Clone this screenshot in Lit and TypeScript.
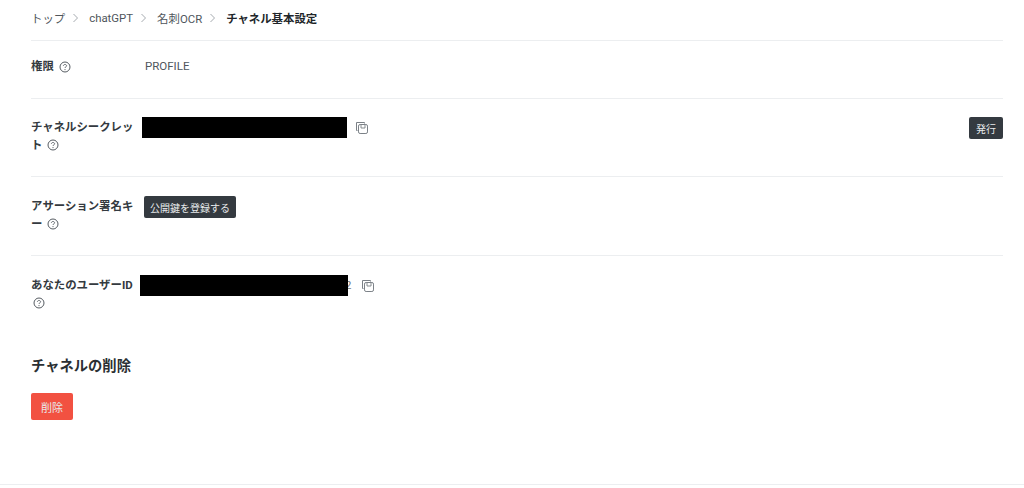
import { LitElement, html, css } from "lit";
import { customElement } from "lit/decorators.js";

const help = html`<svg class="help" viewBox="0 0 12 12" width="12" height="12" fill="none" stroke="#555b61" stroke-width="1"><circle cx="6" cy="6" r="5"/><path d="M4.4 4.9c0-.9.7-1.4 1.6-1.4s1.6.5 1.6 1.3c0 1.1-1.6 1-1.6 2.2" stroke-width=".9"/><circle cx="6" cy="8.6" r=".6" fill="#555b61" stroke="none"/></svg>`;
const copy = html`<svg class="copy" viewBox="0 0 12 12" width="12" height="12" fill="none" stroke="#7b8187" stroke-width="1"><path d="M1.5 8.5h-1v-8h8v1"/><rect x="2.5" y="2.5" width="9" height="9" rx="1.6"/><path d="M5 3v3h4V3" stroke-width=".9"/></svg>`;

@customElement("app-root")
export class AppRoot extends LitElement {
  static styles = css`
    :host { display: block; height: 488px; box-sizing: border-box; background: #fff; font-family: Roboto, "Noto Sans CJK JP", sans-serif; color: #343a40; font-size: 11.4px; overflow: hidden; }
    .page { padding: 0 21px 0 31px; height: 484px; box-sizing: border-box; }
    .foot { height: 1px; background: #eceef0; }
    .crumbs { box-sizing: content-box; height: 36px; padding-bottom: 4px; display: flex; align-items: center; font-size: 11.4px; color: #4f565c; border-bottom: 1px solid #eceef0; }
    .crumbs svg { display: block; margin: 0 10px 0 7px; }
    .crumbs b { color: #212529; font-weight: 700; }
    .row { display: flex; align-items: flex-start; border-bottom: 1px solid #eceef0; box-sizing: border-box; }
    .label { width: 106px; flex: none; font-weight: 700; line-height: 17.5px; color: #343a40; padding-top: 2px; }
    .help { vertical-align: -2.5px; margin-left: 2px; }
    .r1 { height: 58px; padding-top: 16px; }
    .r1 .label { padding-top: 1px; }
    .r1 .val { margin-left: 8px; line-height: 19px; color: #4f565c; font-size: 11.5px; }
    .r2 { height: 78px; padding-top: 18px; }
    .r3 { height: 79px; padding-top: 19px; }
    .r3 .label { margin-right: 7px; }
    .r4 { padding-top: 19px; border-bottom: 0; }
    .mask { background: #000; height: 21px; flex: none; position: relative; z-index: 1; }
    .r2 .label { width: 111px; }
    .r2 .mask { width: 205px; }
    .r2 .copy { margin: 5px 0 0 9px; }
    .r4 .label { width: 109px; }
    .r4 .mask { width: 208px; }
    .r4 .tail { width: 6px; margin-left: -3px; line-height: 21px; color: #6d7379; }
    .r4 .copy { margin: 5px 0 0 11px; }
    .spacer { flex: 1; }
    button { font: inherit; border: 0; border-radius: 2px; color: #e8eaec; background: #343a40; font-size: 10px; padding: 0; height: 22px; display: block; }
    .issue { width: 34px; }
    .key { width: 92px; }
    h2 { font-size: 14.3px; font-weight: 700; line-height: 20px; color: #2b2f33; margin: 44px 0 17px; }
    .del { width: 42px; height: 27px; background: #f25141; font-size: 11px; }
  `;

  render() {
    const sep = html`<svg width="7" height="10" viewBox="0 0 7 10" fill="none" stroke="#a6abb0" stroke-width="1"><path d="M1.5 1l4 4-4 4"/></svg>`;
    return html`
      <div class="page">
        <div class="crumbs"><span>トップ</span>${sep}<span>chatGPT</span>${sep}<span>名刺OCR</span>${sep}<b>チャネル基本設定</b></div>
        <div class="row r1"><div class="label">権限 ${help}</div><div class="val">PROFILE</div></div>
        <div class="row r2"><div class="label">チャネルシークレット ${help}</div><div class="mask"></div>${copy}<div class="spacer"></div><button class="issue">発行</button></div>
        <div class="row r3"><div class="label">アサーション署名キー ${help}</div><button class="key">公開鍵を登録する</button></div>
        <div class="row r4"><div class="label">あなたのユーザーID ${help}</div><div class="mask"></div><span class="tail">2</span>${copy}</div>
        <h2>チャネルの削除</h2>
        <button class="del">削除</button>
      </div>
      <div class="foot"></div>
    `;
  }
}
